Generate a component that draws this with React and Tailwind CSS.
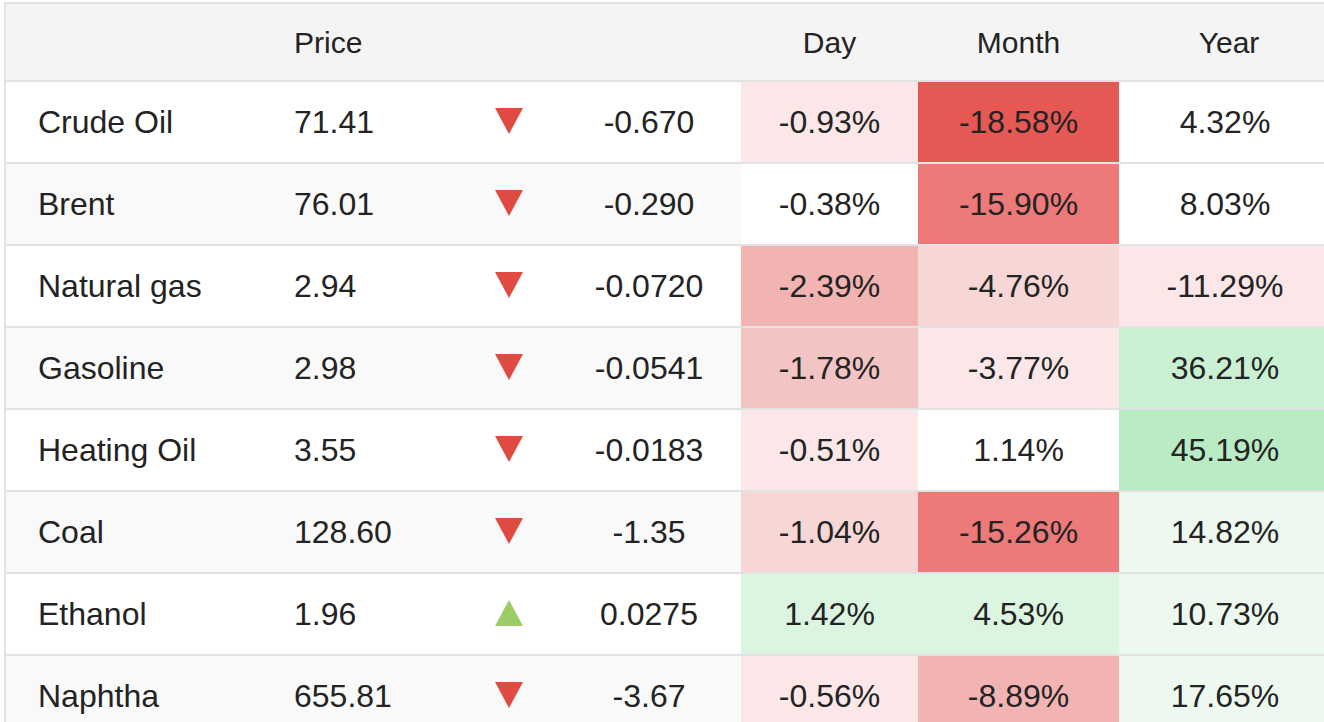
const rows = [
  { name: "Crude Oil", price: "71.41", up: false, chg: "-0.670", day: ["-0.93%", "bg-[#fbe7e7]"], month: ["-18.58%", "bg-[#e55853]"], year: ["4.32%", ""] },
  { name: "Brent", price: "76.01", up: false, chg: "-0.290", day: ["-0.38%", "bg-white"], month: ["-15.90%", "bg-[#eb7a78]"], year: ["8.03%", "bg-white"] },
  { name: "Natural gas", price: "2.94", up: false, chg: "-0.0720", day: ["-2.39%", "bg-[#f2b4b3]"], month: ["-4.76%", "bg-[#f7d7d6]"], year: ["-11.29%", "bg-[#fbe7e7]"] },
  { name: "Gasoline", price: "2.98", up: false, chg: "-0.0541", day: ["-1.78%", "bg-[#f3c4c4]"], month: ["-3.77%", "bg-[#fbe7e7]"], year: ["36.21%", "bg-[#c9f0d3]"] },
  { name: "Heating Oil", price: "3.55", up: false, chg: "-0.0183", day: ["-0.51%", "bg-[#fbe7e7]"], month: ["1.14%", "bg-white"], year: ["45.19%", "bg-[#b9ebc4]"] },
  { name: "Coal", price: "128.60", up: false, chg: "-1.35", day: ["-1.04%", "bg-[#f7d7d6]"], month: ["-15.26%", "bg-[#eb7a78]"], year: ["14.82%", "bg-[#edf9ef]"] },
  { name: "Ethanol", price: "1.96", up: true, chg: "0.0275", day: ["1.42%", "bg-[#dcf5e1]"], month: ["4.53%", "bg-[#dcf5e1]"], year: ["10.73%", "bg-[#edf9ef]"] },
  { name: "Naphtha", price: "655.81", up: false, chg: "-3.67", day: ["-0.56%", "bg-[#fbe7e7]"], month: ["-8.89%", "bg-[#f2b3b3]"], year: ["17.65%", "bg-[#edf9ef]"] },
];

const cols = "grid grid-cols-[254px_200px_97px_184px_177px_201px_220px]";

function Arrow({ up }) {
  return up ? (
    <svg width="28" height="26" viewBox="0 0 28 26">
      <polygon points="14,0 28,26 0,26" fill="#9ccc65" />
    </svg>
  ) : (
    <svg width="28" height="26" viewBox="0 0 28 26">
      <polygon points="0,0 28,0 14,26" fill="#df4a43" />
    </svg>
  );
}

export default function App() {
  return (
    <div className="w-[1324px] h-[722px] overflow-hidden bg-white font-['Liberation_Sans',Arial,sans-serif] text-[#232323]">
      <div className="ml-[4px] mt-[2px] w-[1340px] border-l-2 border-t-2 border-[#e2e2e2]">
        <div className={`${cols} h-[78px] border-b-2 border-[#e2e2e2] bg-[#f4f4f4] text-[30px] items-center`}>
          <div />
          <div className="pl-[34px]">Price</div>
          <div />
          <div />
          <div className="text-center">Day</div>
          <div className="text-center">Month</div>
          <div className="text-center">Year</div>
        </div>
        {rows.map((r, i) => (
          <div
            key={r.name}
            className={`${cols} h-[82px] border-b-2 border-[#e2e2e2] text-[32px] ${i % 2 ? "bg-[#f9f9f9]" : "bg-white"}`}
          >
            <div className="flex items-center pl-[32px]">{r.name}</div>
            <div className="flex items-center pl-[34px]">{r.price}</div>
            <div className="flex items-center justify-center pb-[2px]">
              <Arrow up={r.up} />
            </div>
            <div className="flex items-center justify-center">{r.chg}</div>
            <div className={`flex items-center justify-center ${r.day[1]}`}>{r.day[0]}</div>
            <div className={`flex items-center justify-center ${r.month[1]}`}>{r.month[0]}</div>
            <div className={`flex items-center justify-center pr-[8px] ${r.year[1]}`}>{r.year[0]}</div>
          </div>
        ))}
      </div>
    </div>
  );
}
